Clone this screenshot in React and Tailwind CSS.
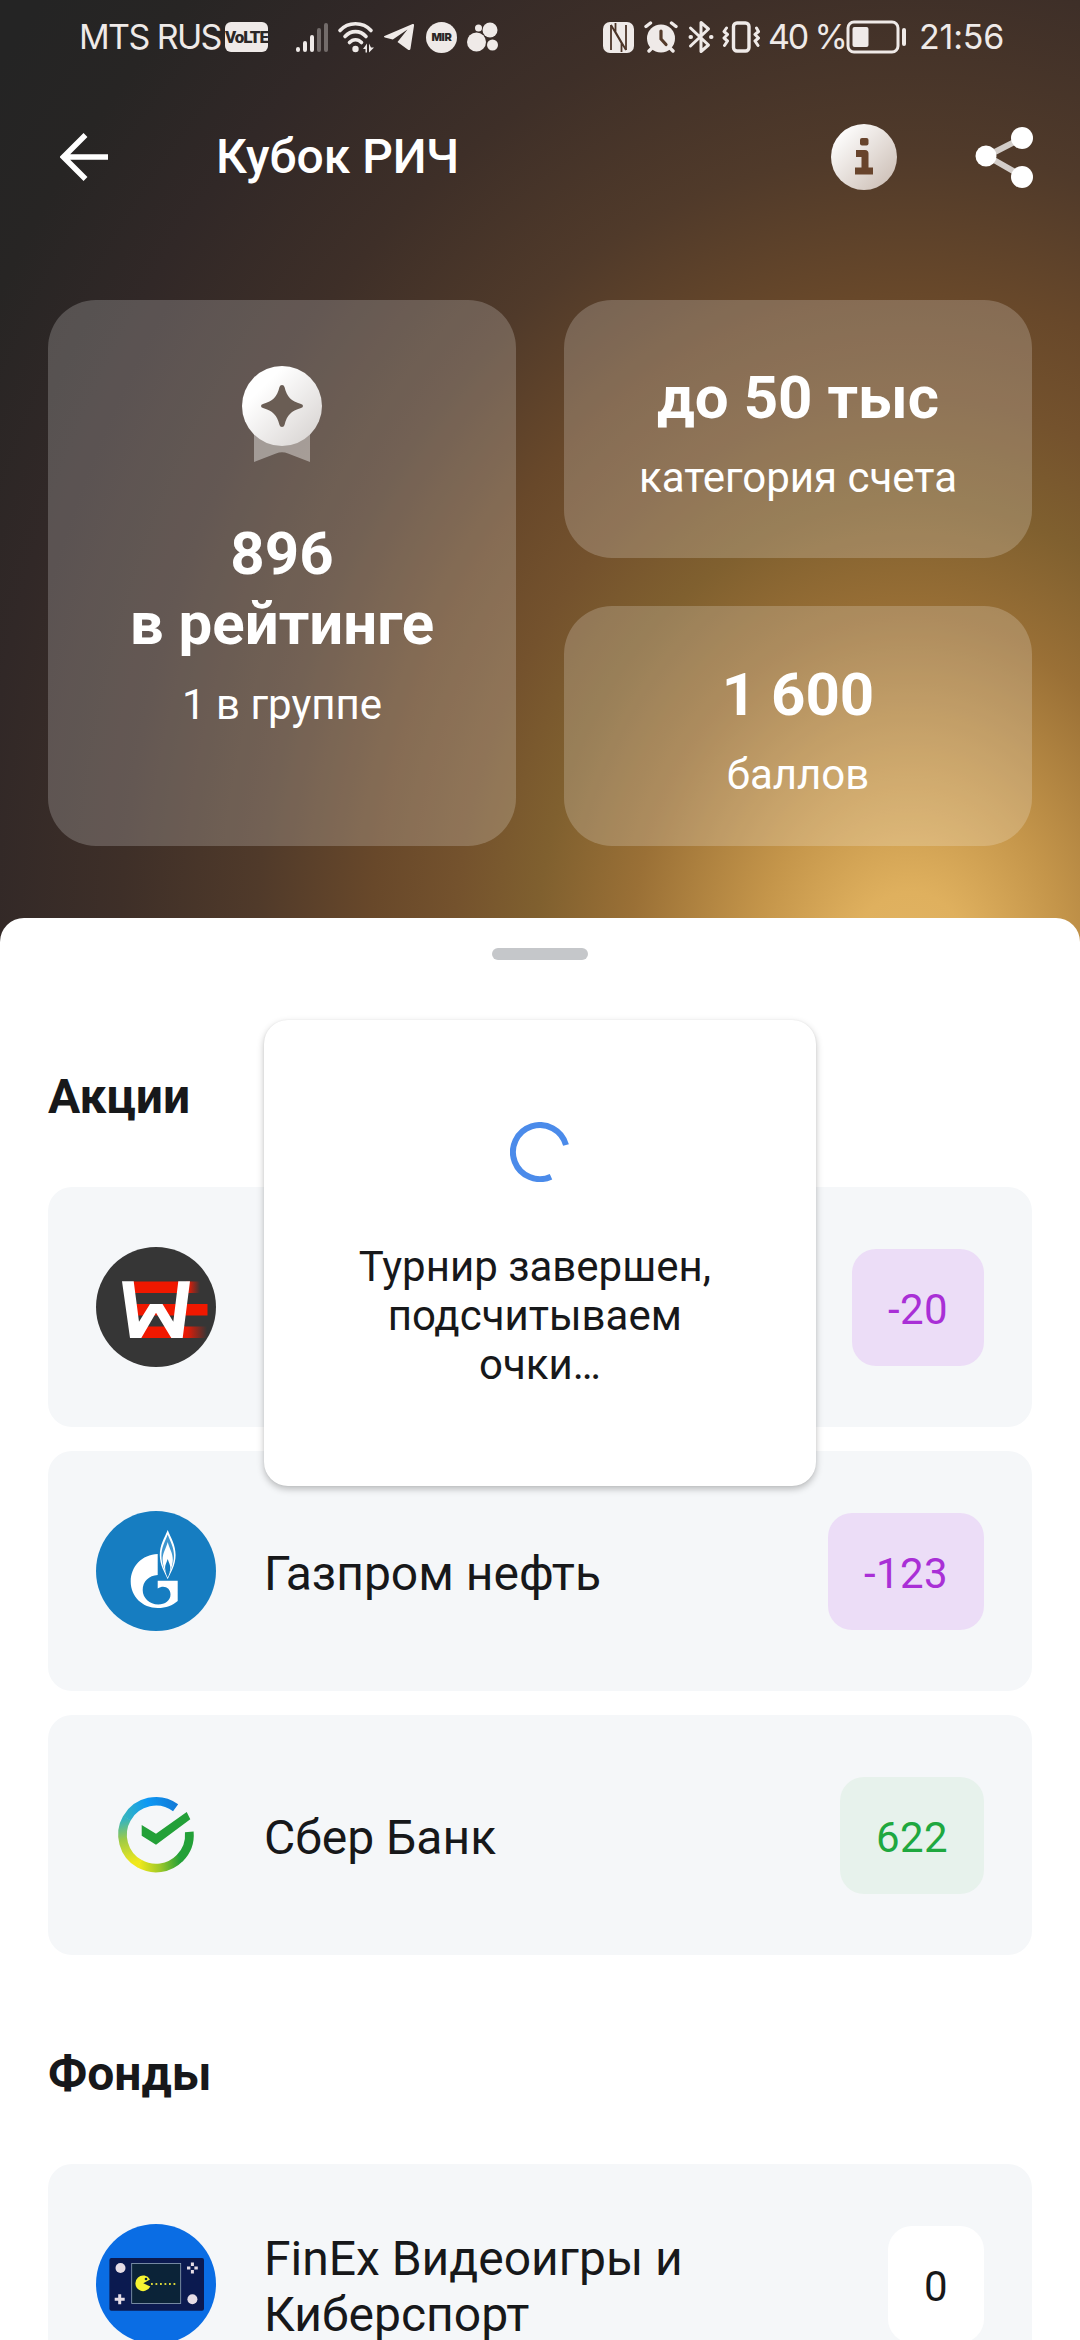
// src/screens/TournamentScreen.jsx
import React from 'react';

const stocks = [
  { id: 'we', name: '', score: '-20', tone: 'down', Logo: WeLogo },
  { id: 'gazprom', name: 'Газпром нефть', score: '-123', tone: 'down', Logo: GazpromLogo },
  { id: 'sber', name: 'Сбер Банк', score: '622', tone: 'up', Logo: SberLogo },
];

const funds = [
  { id: 'finex', name: 'FinEx Видеоигры и Киберспорт', score: '0', tone: 'flat', Logo: FinexLogo },
];

const tones = {
  down: 'bg-[#ecddf7] text-[#a92fd6]',
  up: 'bg-[#e7f2ec] text-[#1fa83f]',
  flat: 'bg-white text-[#17181a]',
};

function WeLogo() {
  return (
    <svg viewBox="0 0 120 120" className="w-full h-full">
      <defs>
        <linearGradient id="weFade" x1="0" x2="1">
          <stop offset="0" stopColor="#f01800" />
          <stop offset="0.2" stopColor="#e01c08" />
          <stop offset="1" stopColor="#363636" />
        </linearGradient>
      </defs>
      <circle cx="60" cy="60" r="60" fill="#363636" />
      <rect x="37" y="34.5" width="46" height="11.5" fill="#f01800" />
      <rect x="90" y="34.5" width="14" height="11.5" fill="url(#weFade)" />
      <rect x="40" y="57" width="71.5" height="11.5" fill="#f01800" />
      <rect x="44" y="79.5" width="45" height="11.5" fill="#f01800" />
      <rect x="87" y="79.5" width="24" height="11.5" fill="url(#weFade)" />
      <path
        d="M26 34.3H37.7L43 74.7L54 57H66.5L77.3 74.7L82.3 34.3H94L86.7 90.9H75.3L60 65.7L45.3 90.9H34Z"
        fill="#fff"
      />
    </svg>
  );
}

function GazpromLogo() {
  return (
    <svg viewBox="0 0 120 120" className="w-full h-full">
      <circle cx="60" cy="60" r="60" fill="#167dc1" />
      <path
        d="M61.7 43C46 43.5 34.7 55.5 34.7 70.5C34.7 85.5 46.5 97 61.7 97C70 97 76.5 94.5 81.7 90V69.7H61.7V77.5C68 73.5 74.5 77 74.5 83.5C74.5 89.5 69 93.5 62.3 93.5C53.5 93.5 46.7 87 46.7 79C46.7 70.5 53 64.3 61.7 64Z"
        fill="#fff"
      />
      <path
        d="M71.7 19C75 27 79.6 34 79.6 44C79.6 54 75 61 71.7 68.3C68.4 61 63.8 54 63.8 44C63.8 34 68.4 27 71.7 19Z"
        fill="#fff"
      />
      <path
        d="M71.7 23.5C74.5 31 78 36 78 45C78 53 74.5 60 71.7 65C68.9 60 65.4 53 65.4 45C65.4 36 68.9 31 71.7 23.5Z"
        fill="#3f97d0"
      />
      <path
        d="M71.7 31C73.5 38 77 42 76.8 49C76.6 55 74 61 71.7 65C69.4 61 66.8 55 66.6 49C66.4 42 69.9 38 71.7 31Z"
        fill="#fff"
      />
      <path
        d="M71.7 48C73 52 74.5 54 74.3 57C74 61 73 64 71.7 66.5C70.4 64 69.4 61 69.1 57C68.9 54 70.4 52 71.7 48Z"
        fill="#167dc1"
      />
    </svg>
  );
}

function SberLogo() {
  return (
    <svg viewBox="0 0 120 120" className="w-full h-full" fill="none" strokeWidth="8.7">
      <defs>
        <linearGradient id="sbTop" gradientUnits="userSpaceOnUse" x1="80" y1="32" x2="31" y2="48">
          <stop offset="0" stopColor="#127bd8" />
          <stop offset="0.5" stopColor="#0d99f5" />
          <stop offset="1" stopColor="#35b4c0" />
        </linearGradient>
        <linearGradient id="sbLeft" gradientUnits="userSpaceOnUse" x1="30" y1="44" x2="40" y2="87">
          <stop offset="0" stopColor="#35b4c0" />
          <stop offset="0.45" stopColor="#9fcb45" />
          <stop offset="1" stopColor="#f0e81c" />
        </linearGradient>
        <linearGradient id="sbBottom" gradientUnits="userSpaceOnUse" x1="43" y1="88" x2="84" y2="84">
          <stop offset="0" stopColor="#f0e81c" />
          <stop offset="0.5" stopColor="#9cc828" />
          <stop offset="1" stopColor="#23a038" />
        </linearGradient>
      </defs>
      <path d="M83.6 83.3A33.4 33.4 0 0 0 93.3 56.8" stroke="#23a038" />
      <path d="M43.3 88.6A33.4 33.4 0 0 0 83.9 83" stroke="url(#sbBottom)" />
      <path d="M31 43A33.4 33.4 0 0 0 43.6 88.8" stroke="url(#sbLeft)" />
      <path d="M79.6 32.7A33.4 33.4 0 0 0 30.9 43.3" stroke="url(#sbTop)" />
      <path d="M45.7 50L60 58.7L90.7 37L94.3 44.3L60 69.7L45.7 60.7Z" fill="#23a038" stroke="none" />
    </svg>
  );
}

function FinexLogo() {
  return (
    <svg viewBox="0 0 120 120" className="w-full h-full">
      <circle cx="60" cy="60" r="60" fill="#0a6de4" />
      <rect x="13.4" y="34" width="94.6" height="52.7" rx="2" fill="#0b1a50" />
      <rect x="35.7" y="39.5" width="49" height="40" fill="#0b2338" stroke="#8fa3b8" strokeWidth="0.8" />
      <circle cx="24.5" cy="44" r="5" fill="#e6dde6" />
      <circle cx="96.4" cy="75.3" r="5" fill="#e6dde6" />
      <path d="M23.7 70.3V80.3M18.7 75.3H28.7" stroke="#e6dde6" strokeWidth="3" />
      <path
        d="M96.4 38.5V42M96.4 46V49.5M91 44H94.4M98.4 44H101.8"
        stroke="#e6dde6"
        strokeWidth="3"
      />
      <path d="M47.3 59.3L54 55.5A7.8 7.8 0 1 0 54.3 62.5Z" fill="#f6f432" />
      <circle cx="50" cy="55" r="1.3" fill="#0b2338" />
      <path d="M55 60H80" stroke="#d8d43a" strokeWidth="1.8" strokeDasharray="1.8 2.7" />
    </svg>
  );
}

function StatusBar() {
  return (
    <div className="flex h-[74px] items-center pl-[79px] text-[#efeae8] font-['Inter','Roboto',sans-serif] text-[34px] leading-none">
      <span className="w-[143px] whitespace-nowrap tracking-[-1.6px]">MTS RUS</span>
      <span className="ml-[3px] flex h-[30px] w-[43px] shrink-0 items-center justify-center rounded-[6px] bg-[#efeae8] font-['Roboto',sans-serif] text-[17px] font-black tracking-[-1px] text-[#2b2726]">
        VoLTE
      </span>
      <svg viewBox="0 0 34 32" className="ml-[27px] h-[32px] w-[34px]" strokeWidth="4" strokeLinecap="round" stroke="currentColor">
        <path d="M3 29V28M10 29V22M17 29V16" />
        <path d="M24 29V9M31 29V4" opacity="0.35" />
      </svg>
      <svg viewBox="0 0 38 32" className="ml-[8px] h-[32px] w-[38px]" fill="none" stroke="currentColor" strokeWidth="3.6" strokeLinecap="round">
        <path d="M3 9.5C11 0.5 26 0.5 34 9.5" />
        <path d="M8 15.5C14 9 23 9 29 15.5" />
        <path d="M12.5 21.5C16 17.8 21 17.8 24.5 21.5" />
        <circle cx="18.5" cy="28" r="3.2" fill="currentColor" stroke="none" />
        <path d="M26 28L30 22.5V31.5H28.5V28ZM32 22.5V31.5L37 26.5H34Z" fill="currentColor" stroke="none" />
      </svg>
      <svg viewBox="0 0 32 28" className="ml-[8px] h-[28px] w-[32px]" fill="currentColor">
        <path d="M1.5 13L29 1.2C30.5 0.6 31.3 1.3 31 2.8L27.5 25.5C27.2 27.2 26 27.5 24.7 26.5L14.5 19L24.5 6.5L9.8 16.5L1.8 14.4C0.8 14.1 0.7 13.4 1.5 13Z" />
      </svg>
      <span className="ml-[11px] flex h-[31px] w-[31px] items-center justify-center rounded-full bg-[#efeae8] text-[11px] font-black tracking-[-0.3px] text-[#2b2726]">
        MIR
      </span>
      <svg viewBox="0 0 32 30" className="ml-[10px] h-[30px] w-[32px]" fill="currentColor">
        <circle cx="9.5" cy="20" r="9.5" />
        <circle cx="23" cy="8" r="7.5" />
        <circle cx="11.5" cy="6" r="3.5" />
        <circle cx="25.5" cy="23" r="5.5" />
      </svg>

      <svg viewBox="0 0 31 31" className="ml-[104px] h-[31px] w-[31px]" fill="none">
        <rect width="31" height="31" rx="7" fill="currentColor" />
        <path d="M8 3V28M23 28V3" stroke="#4c3528" strokeWidth="1.8" />
        <path d="M8 3L23 28M12.5 1L12.5 10L23 28M8 3L18.5 21V30" stroke="#4c3528" strokeWidth="1.8" />
      </svg>
      <svg viewBox="0 0 34 32" className="ml-[10px] h-[32px] w-[34px]" fill="none" stroke="currentColor" strokeLinecap="round">
        <circle cx="17" cy="17.5" r="14" fill="currentColor" stroke="none" />
        <path d="M2 5.5L6.5 2M32 5.5L27.5 2M5 30L8 27M29 30L26 27" strokeWidth="3.4" />
        <path d="M17 10V18L22 23.5" stroke="#543a29" strokeWidth="3.2" />
      </svg>
      <svg viewBox="0 0 26 34" className="ml-[10px] h-[34px] w-[26px]" fill="none" stroke="currentColor" strokeWidth="3" strokeLinejoin="round" strokeLinecap="round">
        <path d="M2.5 8L20.5 25L13 31.5V2.5L20.5 9L2.5 26" />
        <path d="M2.5 17H3M23 17H23.5" strokeWidth="4" />
      </svg>
      <svg viewBox="0 0 38 32" className="ml-[8px] h-[32px] w-[38px]" fill="none" stroke="currentColor" strokeWidth="3" strokeLinejoin="round" strokeLinecap="round">
        <rect x="11.5" y="2" width="15.5" height="28" rx="3.5" strokeWidth="3.4" />
        <path d="M4.5 7L2 10.5L5.5 13.5L2 17L5.5 20L2.5 24.5M34.5 7L36.5 10.5L33 13.5L36.5 17L33 20L36 24.5" />
      </svg>
      <span className="ml-[8px] w-[77px] whitespace-nowrap tracking-[-2.2px]">40 %</span>
      <svg viewBox="0 0 62 34" className="ml-[1px] h-[34px] w-[62px]" fill="none" stroke="currentColor">
        <rect x="2" y="2" width="50" height="30" rx="6" strokeWidth="3" />
        <rect x="6.5" y="7" width="16" height="20" rx="2" fill="currentColor" stroke="none" />
        <path d="M58 10V24" strokeWidth="4" strokeLinecap="round" />
      </svg>
      <span className="ml-[11px] whitespace-nowrap tracking-[-0.2px]">21:56</span>
    </div>
  );
}

function Header() {
  return (
    <header className="flex h-[166px] items-center pl-[60px] pr-[45px] text-white">
      <svg viewBox="0 0 48 48" className="h-[48px] w-[48px]" fill="none" stroke="currentColor" strokeWidth="5.5">
        <path d="M48 24H5M25.5 2L3.5 24L25.5 46" />
      </svg>
      <h1 className="ml-[108px] text-[48px] font-medium leading-[56px]">Кубок РИЧ</h1>
      <svg viewBox="0 0 66 66" className="ml-auto h-[66px] w-[66px]">
        <defs>
          <linearGradient id="infoFill" x1="0" y1="0" x2="1" y2="1">
            <stop offset="0.1" stopColor="#fff" />
            <stop offset="1" stopColor="#c8b9af" />
          </linearGradient>
        </defs>
        <circle cx="33" cy="33" r="33" fill="url(#infoFill)" />
        <rect x="29" y="14" width="8.5" height="7.5" rx="2" fill="#68442c" />
        <path d="M25 29.5H34V46M24 47H42" fill="none" stroke="#68442c" strokeWidth="7" strokeLinejoin="round" />
      </svg>
      <svg viewBox="0 0 60 62" className="ml-[78px] h-[62px] w-[60px]">
        <path d="M47 12L12 30L47 50" fill="none" stroke="#fff" strokeOpacity="0.75" strokeWidth="6" />
        <circle cx="11" cy="30" r="10.5" fill="#fff" />
        <circle cx="47" cy="12" r="11" fill="#fff" />
        <circle cx="47" cy="51" r="11" fill="#fff" />
      </svg>
    </header>
  );
}

function Medal() {
  return (
    <svg viewBox="0 0 80 96" className="h-[96px] w-[80px]">
      <defs>
        <linearGradient id="medalFill" x1="0.1" y1="0.1" x2="0.9" y2="0.9">
          <stop offset="0.2" stopColor="#fff" />
          <stop offset="1" stopColor="#dad6d4" />
        </linearGradient>
      </defs>
      <path d="M12 60H68V96L46 87.5Q40 85 34 87.5L12 96Z" fill="#fff" fillOpacity="0.4" />
      <circle cx="40" cy="40" r="40" fill="url(#medalFill)" />
      <path
        d="M40 19Q42 19 42.5 21C45 31 49 35 59 38Q61 38.5 61 40Q61 41.5 59 42C49 45 45 49 42.5 59Q42 61 40 61Q38 61 37.5 59C35 49 31 45 21 42Q19 41.5 19 40Q19 38.5 21 38C31 35 35 31 37.5 21Q38 19 40 19Z"
        fill="#6a5d54"
      />
    </svg>
  );
}

function AssetRow({ name, score, tone, Logo }) {
  return (
    <li className="flex h-[240px] items-center rounded-[24px] bg-[#f5f7f9] px-[48px]">
      <div className="h-[120px] w-[120px] shrink-0">
        <Logo />
      </div>
      <span className="ml-[48px] w-[520px] pt-[5px] text-[48px] leading-[56px]">{name}</span>
      <span className={`ml-auto flex h-[117px] items-center rounded-[24px] px-[36px] pt-[4px] text-[42px] tracking-[0.4px] ${tones[tone]}`}>
        {score}
      </span>
    </li>
  );
}

function LoadingPopup() {
  return (
    <div className="absolute left-1/2 top-[102px] flex h-[466px] w-[552px] -translate-x-1/2 flex-col items-center rounded-[24px] bg-white pt-[102px] shadow-[0_3px_7px_rgba(0,0,0,0.25),0_0_2px_rgba(0,0,0,0.06)]">
      <svg viewBox="0 0 60 60" className="h-[60px] w-[60px]" fill="none" stroke="#4b8bea" strokeWidth="6">
        <path d="M56 23A27 27 0 1 0 41 54.7" />
      </svg>
      <p className="mt-[60px] text-center text-[42px] leading-[49px]">
        Турнир завершен,&nbsp;
        <br />
        подсчитываем&nbsp;
        <br />
        очки…
      </p>
    </div>
  );
}

export default function App() {
  return (
    <div className="flex h-[2340px] w-[1080px] flex-col overflow-hidden bg-[radial-gradient(1040px_1300px_at_910px_970px,#e2b463_0%,#dfb05e_6%,#c4954a_15%,#9a7036_27%,#80602f_36%,#74522d_44%,#68482a_52%,#503a2a_63%,#3e2f28_76%,#312827_90%,#272524_102%,#242424_112%)] font-['Roboto',sans-serif] text-[#17181a]">
      <StatusBar />
      <Header />

      <section className="mt-[60px] grid h-[546px] grid-cols-2 gap-[48px] px-[48px] text-center text-white">
        <div className="flex flex-col items-center rounded-[48px] bg-white/20 pt-[66px]">
          <Medal />
          <p className="mt-[57px] text-[60px] font-bold leading-[70px]">
            896
            <br />в рейтинге
          </p>
          <p className="mt-[21px] text-[42px] leading-[49px]">1 в группе</p>
        </div>
        <div className="flex flex-col gap-[48px]">
          <div className="h-[258px] rounded-[48px] bg-white/20 pt-[63px]">
            <p className="text-[60px] font-bold leading-[70px]">до 50 тыс</p>
            <p className="mt-[20px] text-[42px] leading-[49px]">категория счета</p>
          </div>
          <div className="h-[240px] rounded-[48px] bg-white/20 pt-[54px]">
            <p className="text-[60px] font-bold leading-[70px]">1 600</p>
            <p className="mt-[20px] text-[42px] leading-[49px]">баллов</p>
          </div>
        </div>
      </section>

      <main className="relative mt-[72px] h-[1422px] shrink-0 rounded-t-[24px] bg-white px-[48px] pt-[30px]">
        <div className="mx-auto h-[12px] w-[96px] rounded-full bg-[#c5c7ca]" />
        <h2 className="mt-[109px] text-[48px] font-bold leading-[56px]">Акции</h2>
        <ul className="mt-[62px] flex flex-col gap-[24px]">
          {stocks.map(s => (
            <AssetRow key={s.id} {...s} />
          ))}
        </ul>
        <h2 className="mt-[91px] text-[48px] font-bold leading-[56px]">Фонды</h2>
        <ul className="mt-[62px] flex flex-col gap-[24px]">
          {funds.map(f => (
            <AssetRow key={f.id} {...f} />
          ))}
        </ul>
        <LoadingPopup />
      </main>
    </div>
  );
}
